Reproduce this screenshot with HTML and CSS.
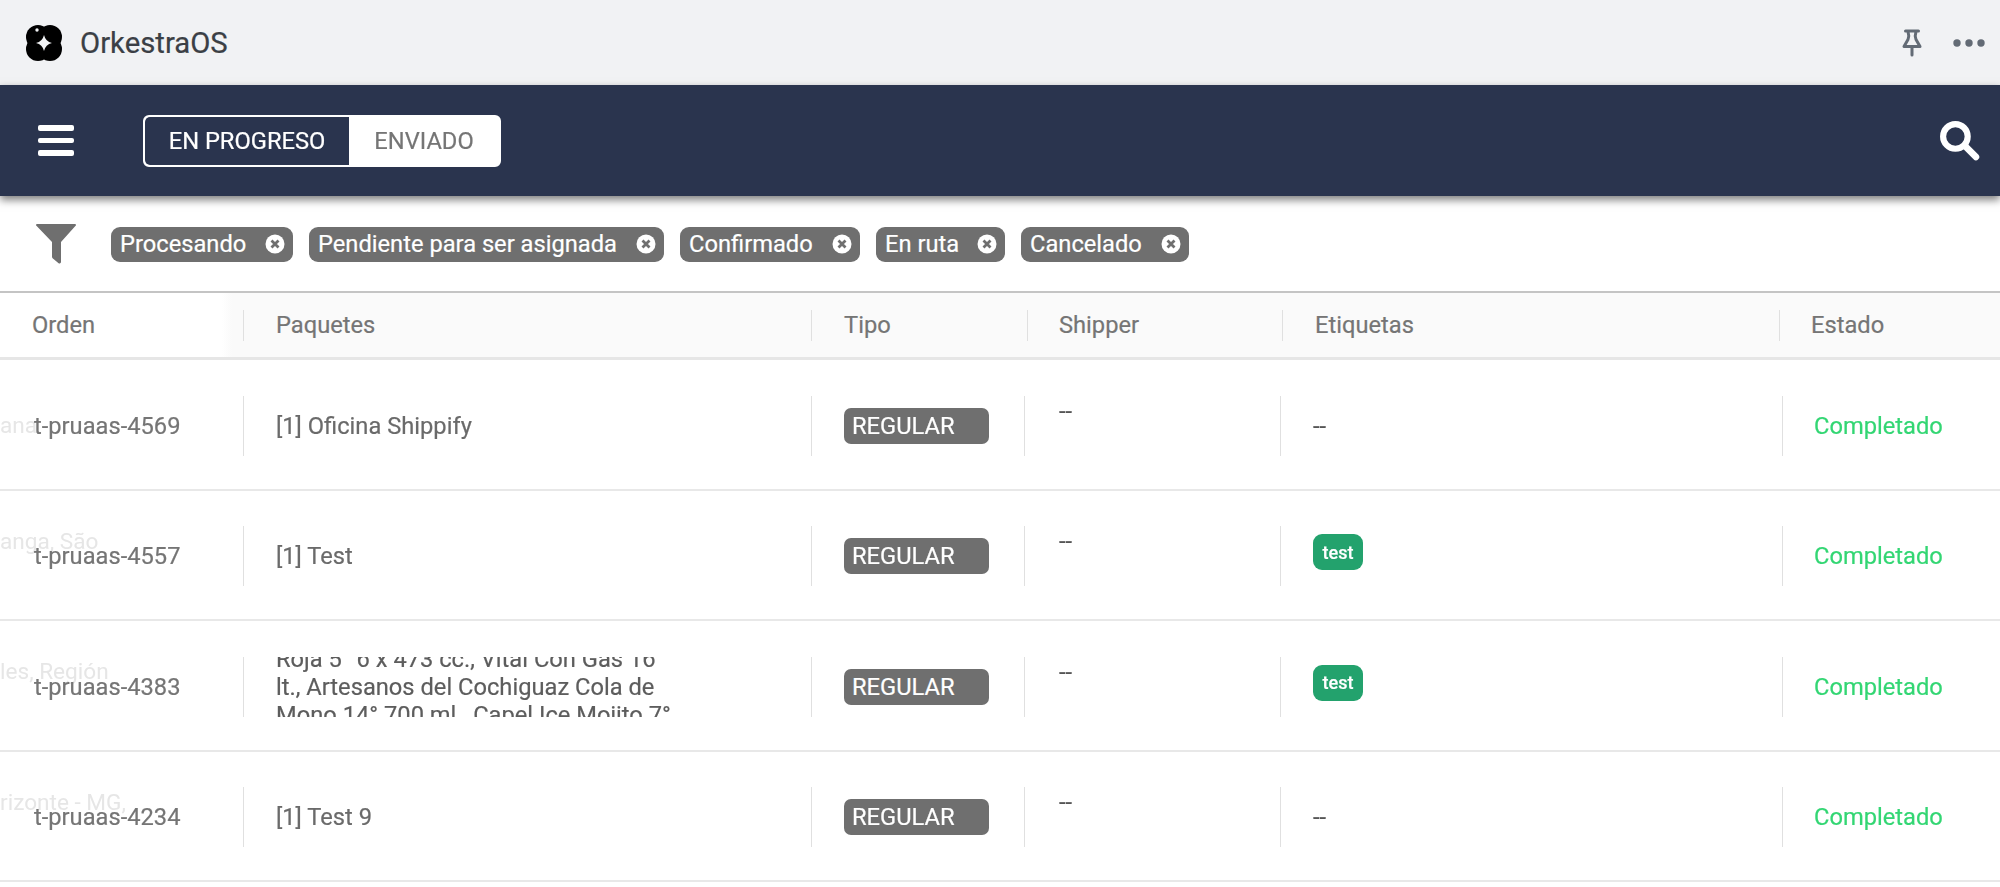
FILE: index.html
```html
<!DOCTYPE html>
<html lang="es">
<head>
<meta charset="utf-8">
<title>OrkestraOS</title>
<link rel="stylesheet" href="styles.css">
</head>
<body>
<div class="page">
  <header class="titlebar">
    <div class="brand">
      <svg class="logo" viewBox="0 0 38 38"><circle cx="13" cy="13" r="12"/><circle cx="25" cy="13" r="12"/><circle cx="13" cy="25" r="12"/><circle cx="25" cy="25" r="12"/><path class="logo-hole" d="M19 11 Q20.500 17.500 27 19 Q20.500 20.500 19 27 Q17.500 20.500 11 19 Q17.500 17.500 19 11Z"/><circle class="logo-hole" cx="12" cy="6" r="1.700"/></svg>
      <span class="brand-name">OrkestraOS</span>
    </div>
    <div class="title-actions">
      <svg class="pin" viewBox="0 0 22 28"><path d="M4.500 2h13M7 2.500c1 3 1 5.500 0 8L3 17.500h16L15 10.500c-1-2.500-1-5 0-8M11 18v8" fill="none" stroke="#636b75" stroke-width="3" stroke-linecap="round" stroke-linejoin="round"/></svg>
      <svg class="dots" viewBox="0 0 32 8"><circle cx="4" cy="4" r="3.700"/><circle cx="16" cy="4" r="3.700"/><circle cx="28" cy="4" r="3.700"/></svg>
    </div>
  </header>

  <nav class="navbar">
    <div class="hamburger"><span></span><span></span><span></span></div>
    <div class="toggle">
      <span class="toggle-item active">EN PROGRESO</span>
      <span class="toggle-item">ENVIADO</span>
    </div>
    <svg class="search" viewBox="0 0 40 40"><circle cx="16" cy="16" r="12" fill="none" stroke="#fff" stroke-width="6"/><path d="M26 26l10 10" stroke="#fff" stroke-width="6.500" stroke-linecap="round"/></svg>
  </nav>

  <section class="filters">
    <svg class="funnel" viewBox="0 0 40 41"><path d="M1 1h38a1 1 0 0 1 .800 1.600L25 19v20a1.500 1.500 0 0 1-2.400 1.200l-6-5a2 2 0 0 1-.600-1.500V19L.200 2.600A1 1 0 0 1 1 1z"/></svg>
    <div class="chips">
      <span class="chip c1">Procesando<svg class="x" viewBox="0 0 20 20"><circle cx="10" cy="10" r="9.500" fill="#fff"/><path d="M6.500 6.500l7 7M13.500 6.500l-7 7" stroke="#6f6f6f" stroke-width="2.800"/></svg></span>
      <span class="chip c2">Pendiente para ser asignada<svg class="x" viewBox="0 0 20 20"><circle cx="10" cy="10" r="9.500" fill="#fff"/><path d="M6.500 6.500l7 7M13.500 6.500l-7 7" stroke="#6f6f6f" stroke-width="2.800"/></svg></span>
      <span class="chip c3">Confirmado<svg class="x" viewBox="0 0 20 20"><circle cx="10" cy="10" r="9.500" fill="#fff"/><path d="M6.500 6.500l7 7M13.500 6.500l-7 7" stroke="#6f6f6f" stroke-width="2.800"/></svg></span>
      <span class="chip c4">En ruta<svg class="x" viewBox="0 0 20 20"><circle cx="10" cy="10" r="9.500" fill="#fff"/><path d="M6.500 6.500l7 7M13.500 6.500l-7 7" stroke="#6f6f6f" stroke-width="2.800"/></svg></span>
      <span class="chip c5">Cancelado<svg class="x" viewBox="0 0 20 20"><circle cx="10" cy="10" r="9.500" fill="#fff"/><path d="M6.500 6.500l7 7M13.500 6.500l-7 7" stroke="#6f6f6f" stroke-width="2.800"/></svg></span>
    </div>
  </section>

  <section class="table">
    <div class="thead">
      <div class="th first">Orden</div>
      <div class="th">Paquetes</div>
      <div class="th">Tipo</div>
      <div class="th nudge">Shipper</div>
      <div class="th">Etiquetas</div>
      <div class="th nudge">Estado</div>
    </div>

    <div class="row">
      <span class="ghost g-mid">ana</span>
      <div class="td first">t-pruaas-4569</div>
      <div class="td">[1] Oficina Shippify</div>
      <div class="td"><span class="type">REGULAR</span></div>
      <div class="td top"><span class="dash">--</span></div>
      <div class="td"><span class="dash">--</span></div>
      <div class="td status">Completado</div>
    </div>

    <div class="row">
      <span class="ghost">anga, São</span>
      <div class="td first">t-pruaas-4557</div>
      <div class="td">[1] Test</div>
      <div class="td"><span class="type">REGULAR</span></div>
      <div class="td top"><span class="dash">--</span></div>
      <div class="td tagcell"><span class="tag">test</span></div>
      <div class="td status">Completado</div>
    </div>

    <div class="row">
      <span class="ghost">les, Región</span>
      <div class="td first">t-pruaas-4383</div>
      <div class="td long"><p class="clip">Roja 5° 6 x 473 cc., Vital Con Gas 16 lt., Artesanos del Cochiguaz Cola de Mono 14° 700 ml., Capel Ice Mojito 7°</p></div>
      <div class="td"><span class="type">REGULAR</span></div>
      <div class="td top"><span class="dash">--</span></div>
      <div class="td tagcell"><span class="tag">test</span></div>
      <div class="td status">Completado</div>
    </div>

    <div class="row">
      <span class="ghost">rizonte - MG,</span>
      <div class="td first">t-pruaas-4234</div>
      <div class="td">[1] Test 9</div>
      <div class="td"><span class="type">REGULAR</span></div>
      <div class="td top"><span class="dash">--</span></div>
      <div class="td"><span class="dash">--</span></div>
      <div class="td status">Completado</div>
    </div>
  </section>
</div>
</body>
</html>
```
FILE: styles.css
```css
* { box-sizing: border-box; }
html, body { margin: 0; height: 100%; background: #fff; overflow: hidden; }
body { font-family: Roboto, "Liberation Sans", sans-serif; color: #6f6f6f; -webkit-text-stroke: 0.2px; }
.page { width: 2000px; height: 887px; overflow: hidden; filter: blur(0.5px); }

.titlebar { height: 85px; background: #f1f2f4; display: flex; align-items: center; justify-content: space-between; padding: 0 15px 0 25px; }
.brand { display: flex; align-items: center; gap: 18px; }
.logo { width: 38px; height: 38px; fill: #000; display: block; }
.logo-hole { fill: #f1f2f4; }
.brand-name { font-size: 29.300px; color: #3b3f45; margin-left: -1px; }
.title-actions { display: flex; align-items: center; gap: 30px; }
.pin { width: 22px; height: 28px; display: block; }
.dots { width: 32px; height: 8px; fill: #636b75; display: block; }

.navbar { height: 111px; background: #2a344e; display: flex; align-items: center; padding: 0 20px 0 38px; box-shadow: 0 4px 8px rgba(0, 0, 0, .5); position: relative; }
.hamburger { width: 36px; display: flex; flex-direction: column; gap: 7px; margin-right: 69px; }
.hamburger span { height: 5.500px; background: #fff; border-radius: 2px; }
.toggle { width: 358px; height: 52px; display: flex; background: #fff; border-radius: 6px; font-size: 23.700px; overflow: hidden; border: 2px solid #fff; }
.toggle-item { display: flex; align-items: center; justify-content: center; flex: 1; color: #757575; }
.toggle-item.active { flex: 0 0 204px; background: #2a344e; color: #fff; border-radius: 5px 0 0 5px; }
.search { width: 41px; height: 41px; margin-left: auto; display: block; }

.filters { height: 95px; display: flex; align-items: center; padding: 0 0 0 36px; }
.funnel { width: 40px; height: 41px; fill: #6f6f6f; display: block; margin-right: 35px; margin-top: -1px; }
.chips { display: flex; gap: 16px; margin-top: 1px; }
.chip { height: 35px; background: #6f6f6f; color: #fff; border-radius: 9px; font-size: 23.700px; display: flex; align-items: center; justify-content: space-between; padding: 0 8px 0 9px; white-space: nowrap; }
.c1 { width: 182px; }
.c2 { width: 355px; }
.c3 { width: 180px; }
.c4 { width: 129px; }
.c5 { width: 168px; }
.x { width: 20px; height: 20px; display: block; flex: none; }

.table { position: relative; }
.thead { height: 69px; display: grid; grid-template-columns: 243px 568px 216px 255px 497px 1fr; align-items: center; background: #fafafa; border-top: 2px solid #c4c4c4; border-bottom: 3px solid #e6e6e6; }
.th { height: 31px; display: flex; align-items: center; font-size: 23.700px; padding-left: 32px; border-left: 1px solid #e0e0e0; color: #757575; }
.th.nudge { padding-left: 31px; }
.th.first { height: 64px; border-left: 0; background: linear-gradient(90deg, #fff 222px, #fafafa 232px); padding-left: 32px; }

.row { position: relative; height: 130.600px; padding-top: 2.600px; display: grid; grid-template-columns: 243px 568px 213px 256px 502px 1fr; align-items: center; border-bottom: 2px solid #e8e8e8; }
.td { height: 60px; display: flex; align-items: center; font-size: 23.700px; padding-left: 32px; border-left: 1px solid #e0e0e0; color: #6a6a6a; position: relative; }
.td.first { border-left: 0; padding-left: 34px; color: #757575; }
.td.top { align-items: flex-start; padding-left: 34px; padding-top: 1px; }
.td.long { align-items: center; overflow: hidden; }
.clip { margin: 0; width: 400px; line-height: 28px; color: #5d5d5d; flex: none; }
.td.tagcell { align-items: flex-start; padding-top: 8px; }
.dash { color: #555; }
.type { width: 145px; height: 36px; background: #6f6f6f; color: #fff; border-radius: 7px; display: flex; align-items: center; padding-left: 8px; font-size: 23.700px; }
.tag { width: 50px; height: 36px; background: #23a26d; color: #fff; border-radius: 9px; display: flex; align-items: center; justify-content: center; font-size: 18px; font-weight: 500; }
.status { color: #33d673; padding-left: 31px; }
.ghost { position: absolute; left: 0; top: 37px; font-size: 22.600px; color: #e6e6e6; white-space: nowrap; -webkit-text-stroke: 0; }
.g-mid { top: 52px; }
```
